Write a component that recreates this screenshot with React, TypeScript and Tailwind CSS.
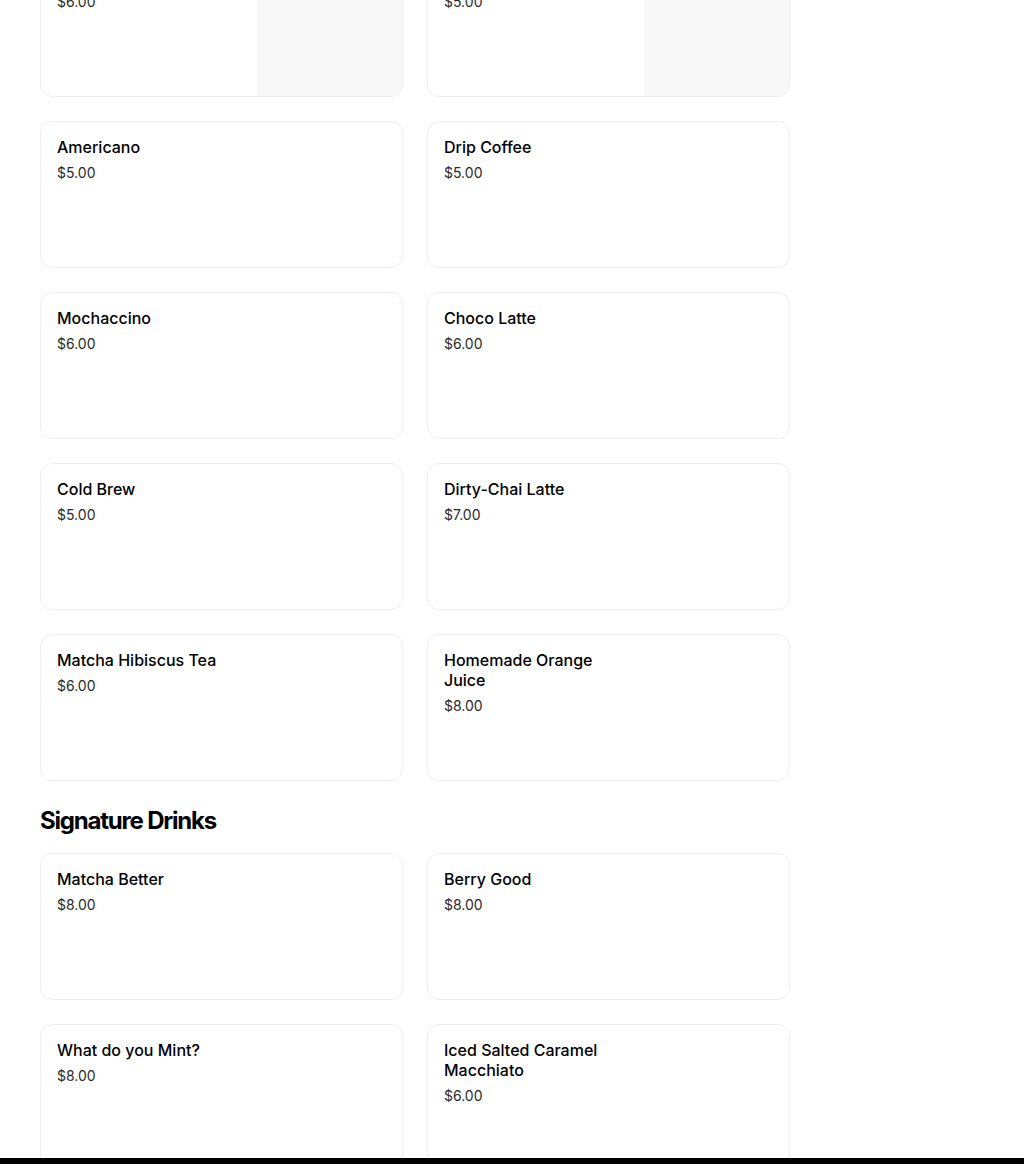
type Item = { name: string; price: string; image?: boolean };

const topRow: Item[] = [
  { name: 'Latte', price: '$6.00', image: true },
  { name: 'Cappuccino', price: '$5.00', image: true },
];

const classics: Item[] = [
  { name: 'Americano', price: '$5.00' },
  { name: 'Drip Coffee', price: '$5.00' },
  { name: 'Mochaccino', price: '$6.00' },
  { name: 'Choco Latte', price: '$6.00' },
  { name: 'Cold Brew', price: '$5.00' },
  { name: 'Dirty-Chai Latte', price: '$7.00' },
  { name: 'Matcha Hibiscus Tea', price: '$6.00' },
  { name: 'Homemade Orange Juice', price: '$8.00' },
];

const signature: Item[] = [
  { name: 'Matcha Better', price: '$8.00' },
  { name: 'Berry Good', price: '$8.00' },
  { name: 'What do you Mint?', price: '$8.00' },
  { name: 'Iced Salted Caramel Macchiato', price: '$6.00' },
];

function MenuCard({ item }: { item: Item }) {
  return (
    <li className="flex h-[147px] overflow-hidden rounded-xl border border-[#eeeeee] bg-white">
      <div className="w-[207px] shrink-0 px-4 pt-[15px]">
        <p className="text-base font-medium leading-5 text-black">{item.name}</p>
        <p className="mt-[6px] text-sm leading-5 text-[#2a2a2a]">{item.price}</p>
      </div>
      <div className="flex-1" />
      {item.image && <div className="h-full w-[145px] bg-[#f8f8f8]" aria-hidden="true" />}
    </li>
  );
}

function Grid({ items }: { items: Item[] }) {
  return (
    <ul className="grid w-[750px] grid-cols-2 gap-6">
      {items.map((item) => (
        <MenuCard key={item.name} item={item} />
      ))}
    </ul>
  );
}

export default function App() {
  return (
    <div className="min-h-[1164px] bg-white px-10 font-['Inter','Liberation_Sans',sans-serif]">
      <div className="-mt-[50px] flex flex-col gap-6">
        <Grid items={topRow} />
        <Grid items={classics} />
      </div>
      <section className="pb-10">
        <h2 className="mb-4 mt-6 text-2xl font-bold leading-8 tracking-[-0.05em] text-black">
          Signature Drinks
        </h2>
        <Grid items={signature} />
      </section>
      <div className="fixed inset-x-0 bottom-0 h-[6px] bg-black" />
    </div>
  );
}
